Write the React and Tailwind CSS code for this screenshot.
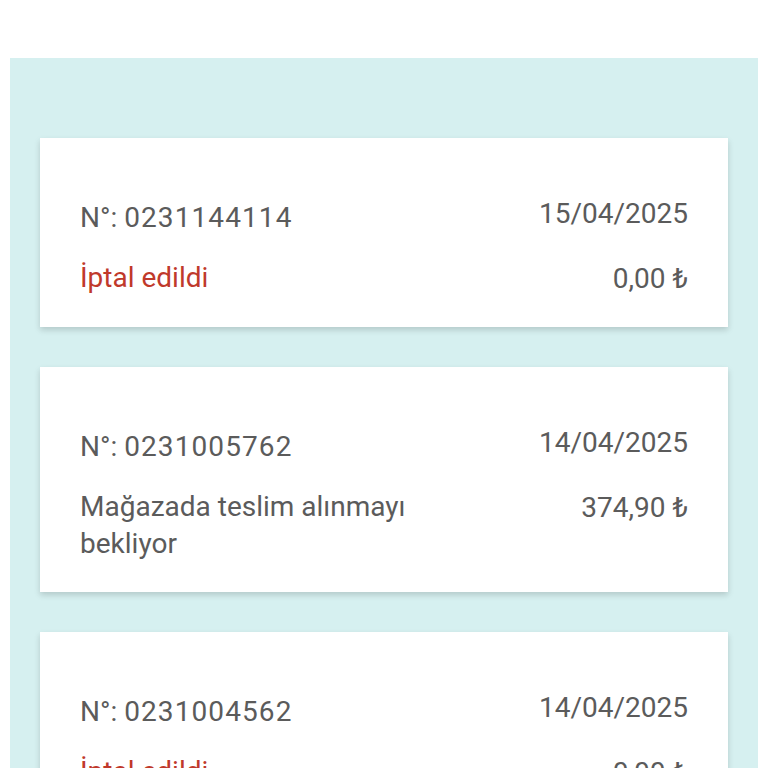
import React from 'react';

const orders = [
  { no: '0231144114', date: '15/04/2025', status: 'İptal edildi', cancelled: true, amount: '0,00 ₺' },
  { no: '0231005762', date: '14/04/2025', status: 'Mağazada teslim alınmayı bekliyor', cancelled: false, amount: '374,90 ₺' },
  { no: '0231004562', date: '14/04/2025', status: 'İptal edildi', cancelled: true, amount: '0,00 ₺' },
];

const OrderCard = ({ order }) => (
  <div className="bg-white px-[40px] pt-[61px] pb-[30px] shadow-[0_3px_6px_rgba(0,0,0,0.16)]">
    <div className="flex justify-between items-start">
      <span>
        N°: <span className="tracking-[1.1px]">{order.no}</span>
      </span>
      <span className="-mt-[4px]">{order.date}</span>
    </div>
    <div className="flex justify-between items-start mt-[23px]">
      <span className={`max-w-[60%] ${order.cancelled ? 'text-[#c0392b]' : ''}`}>{order.status}</span>
      <span className="mt-[1px] whitespace-nowrap">{order.amount}</span>
    </div>
  </div>
);

export default function App() {
  return (
    <div
      className="min-h-screen bg-white pt-[58px] px-[10px] text-[#5b5b5b] text-[28px] leading-[37px]"
      style={{ fontFamily: 'Roboto, "Noto Sans", sans-serif' }}
    >
      <div className="bg-[#d6f0f0] min-h-[710px] px-[30px] pt-[80px] pb-[40px] flex flex-col gap-[40px]">
        {orders.map((o) => (
          <OrderCard key={o.no} order={o} />
        ))}
      </div>
    </div>
  );
}
